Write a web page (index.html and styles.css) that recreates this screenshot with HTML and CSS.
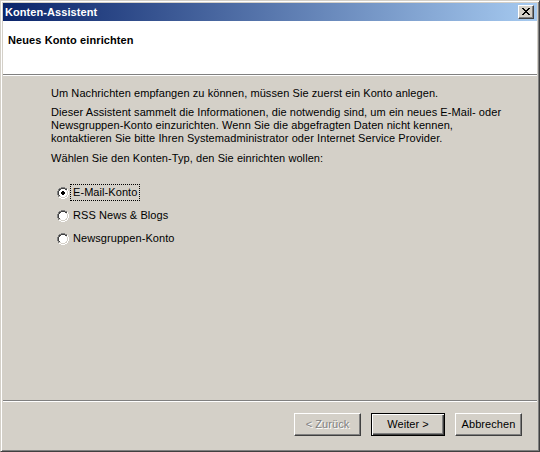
FILE: index.html
```html
<!DOCTYPE html>
<html lang="de">
<head>
<meta charset="utf-8">
<title>Konten-Assistent</title>
<link rel="stylesheet" href="styles.css">
</head>
<body>
<div class="window">
  <div class="titlebar">
    <span class="title">Konten-Assistent</span>
    <span class="close-btn">
      <svg width="8" height="7" viewBox="0 0 8 7" shape-rendering="crispEdges">
        <path d="M0 0h2v1h-2zM6 0h2v1h-2zM1 1h2v1h-2zM5 1h2v1h-2zM2 2h4v1h-4zM3 3h2v1h-2zM2 4h4v1h-4zM1 5h2v1h-2zM5 5h2v1h-2zM0 6h2v1h-2zM6 6h2v1h-2z" fill="#000"/>
      </svg>
    </span>
  </div>
  <div class="header">Neues Konto einrichten</div>
  <div class="content">
    <p class="para">Um Nachrichten empfangen zu können, müssen Sie zuerst ein Konto anlegen.</p>
    <p class="para">Dieser Assistent sammelt die Informationen, die notwendig sind, um ein neues E-Mail- oder<br>Newsgruppen-Konto einzurichten. Wenn Sie die abgefragten Daten nicht kennen,<br>kontaktieren Sie bitte Ihren Systemadministrator oder Internet Service Provider.</p>
    <p class="para para-last">Wählen Sie den Konten-Typ, den Sie einrichten wollen:</p>
    <div class="radios">
      <div class="radio-row">
        <svg class="radio" width="12" height="12" viewBox="0 0 12 12" shape-rendering="crispEdges">
          <path d="M4 0h4v1h-4zM2 1h2v1h-2zM8 1h2v1h-2zM1 2h1v2h-1zM0 4h1v4h-1zM1 8h1v2h-1z" fill="#808080"/>
          <path d="M4 1h4v1h-4zM2 2h2v1h-2zM8 2h2v1h-2zM2 3h1v1h-1zM1 4h1v4h-1zM2 8h1v1h-1z" fill="#404040"/>
          <path d="M4 2h4v1h-4zM3 3h6v1h-6zM2 4h8v4h-8zM3 8h6v1h-6zM4 9h4v1h-4z" fill="#fff"/>
          <path d="M9 3h1v1h-1zM10 4h1v4h-1zM9 8h1v1h-1zM8 9h2v1h-2zM4 10h4v1h-4zM2 9h2v1h-2z" fill="#d4d0c8"/>
          <path d="M10 2h1v2h-1zM11 4h1v4h-1zM10 8h1v2h-1zM8 10h2v1h-2zM4 11h4v1h-4zM2 10h2v1h-2z" fill="#fff"/>
          <path d="M5 4h2v1h-2zM4 5h4v2h-4zM5 7h2v1h-2z" fill="#000"/>
        </svg>
        <span class="label focused">E-Mail-Konto</span>
      </div>
      <div class="radio-row">
        <svg class="radio" width="12" height="12" viewBox="0 0 12 12" shape-rendering="crispEdges">
          <path d="M4 0h4v1h-4zM2 1h2v1h-2zM8 1h2v1h-2zM1 2h1v2h-1zM0 4h1v4h-1zM1 8h1v2h-1z" fill="#808080"/>
          <path d="M4 1h4v1h-4zM2 2h2v1h-2zM8 2h2v1h-2zM2 3h1v1h-1zM1 4h1v4h-1zM2 8h1v1h-1z" fill="#404040"/>
          <path d="M4 2h4v1h-4zM3 3h6v1h-6zM2 4h8v4h-8zM3 8h6v1h-6zM4 9h4v1h-4z" fill="#fff"/>
          <path d="M9 3h1v1h-1zM10 4h1v4h-1zM9 8h1v1h-1zM8 9h2v1h-2zM4 10h4v1h-4zM2 9h2v1h-2z" fill="#d4d0c8"/>
          <path d="M10 2h1v2h-1zM11 4h1v4h-1zM10 8h1v2h-1zM8 10h2v1h-2zM4 11h4v1h-4zM2 10h2v1h-2z" fill="#fff"/>
        </svg>
        <span class="label">RSS News &amp; Blogs</span>
      </div>
      <div class="radio-row">
        <svg class="radio" width="12" height="12" viewBox="0 0 12 12" shape-rendering="crispEdges">
          <path d="M4 0h4v1h-4zM2 1h2v1h-2zM8 1h2v1h-2zM1 2h1v2h-1zM0 4h1v4h-1zM1 8h1v2h-1z" fill="#808080"/>
          <path d="M4 1h4v1h-4zM2 2h2v1h-2zM8 2h2v1h-2zM2 3h1v1h-1zM1 4h1v4h-1zM2 8h1v1h-1z" fill="#404040"/>
          <path d="M4 2h4v1h-4zM3 3h6v1h-6zM2 4h8v4h-8zM3 8h6v1h-6zM4 9h4v1h-4z" fill="#fff"/>
          <path d="M9 3h1v1h-1zM10 4h1v4h-1zM9 8h1v1h-1zM8 9h2v1h-2zM4 10h4v1h-4zM2 9h2v1h-2z" fill="#d4d0c8"/>
          <path d="M10 2h1v2h-1zM11 4h1v4h-1zM10 8h1v2h-1zM8 10h2v1h-2zM4 11h4v1h-4zM2 10h2v1h-2z" fill="#fff"/>
        </svg>
        <span class="label">Newsgruppen-Konto</span>
      </div>
    </div>
  </div>
  <div class="separator"></div>
  <div class="footer">
    <button class="btn btn-disabled btn-back">&lt; Zurück</button>
    <button class="btn btn-default btn-next">Weiter &gt;</button>
    <button class="btn btn-cancel">Abbrechen</button>
  </div>
</div>
</body>
</html>
```
FILE: styles.css
```css
* {
  box-sizing: border-box;
}

html, body {
  margin: 0;
  padding: 0;
  background: #d4d0c8;
}

body {
  font-family: "Liberation Sans", Arial, sans-serif;
  font-size: 11px;
  letter-spacing: 0.07px;
  color: #000;
}

.window {
  width: 540px;
  height: 452px;
  display: flex;
  flex-direction: column;
  background: #d4d0c8;
  border: 1px solid;
  border-color: #d4d0c8 #404040 #404040 #d4d0c8;
  box-shadow: inset 1px 1px 0 #fff, inset -1px -1px 0 #808080;
  padding: 2px;
}

.window > * {
  flex-shrink: 0;
}

.titlebar {
  height: 18px;
  display: flex;
  align-items: center;
  justify-content: space-between;
  padding: 0 3px 0 2px;
  background: linear-gradient(to right, #0a246a, #a6caf0);
}

.title {
  color: #fff;
  font-weight: bold;
  font-size: 11px;
  line-height: 13px;
}

.close-btn {
  width: 16px;
  height: 14px;
  display: flex;
  align-items: center;
  justify-content: center;
  background: #d4d0c8;
  border: 1px solid;
  border-color: #fff #404040 #404040 #fff;
  box-shadow: inset -1px -1px 0 #808080;
  padding: 0 1px 1px 0;
}

.header {
  height: 54px;
  background: #fff;
  border-bottom: 1px solid #808080;
  padding: 13px 0 0 5px;
  font-weight: bold;
  letter-spacing: 0.1px;
  line-height: 13px;
}

.content {
  flex: 1 1 auto;
  border-top: 1px solid #fff;
  padding: 11px 0 0 48px;
}

.para {
  margin: 0 0 6px;
  line-height: 13px;
}

.para-last {
  margin-top: 7px;
  margin-bottom: 0;
}

.radios {
  display: flex;
  flex-direction: column;
  gap: 6px;
  margin-top: 19px;
  padding-left: 6px;
}

.radio-row {
  display: flex;
  align-items: center;
  height: 17px;
}

.radio {
  flex: 0 0 auto;
  display: block;
}

.label {
  margin-left: 1px;
  padding: 0 2px;
  line-height: 15px;
  border: 1px dotted transparent;
}

.label.focused {
  border-color: #000;
}

.separator {
  height: 2px;
  border-top: 1px solid #808080;
  border-bottom: 1px solid #fff;
}

.footer {
  height: 47px;
  display: flex;
  justify-content: flex-end;
  align-items: flex-start;
  gap: 10px;
  padding: 11px 15px 0 0;
}

.btn {
  height: 23px;
  font-family: "Liberation Sans", Arial, sans-serif;
  font-size: 11px;
  letter-spacing: 0.07px;
  color: #000;
  background: #d4d0c8;
  border: 1px solid;
  border-color: #fff #404040 #404040 #fff;
  box-shadow: inset -1px -1px 0 #808080;
  padding: 0 0 1px;
  margin: 0;
}

.btn-back {
  width: 67px;
}

.btn-next {
  width: 74px;
}

.btn-cancel {
  width: 67px;
}

.btn-default {
  border: 1px solid #000;
  box-shadow: inset 1px 1px 0 #fff, inset -1px -1px 0 #404040, inset -2px -2px 0 #808080;
}

.btn-disabled {
  color: #808080;
  text-shadow: 1px 1px 0 #fff;
}
```
